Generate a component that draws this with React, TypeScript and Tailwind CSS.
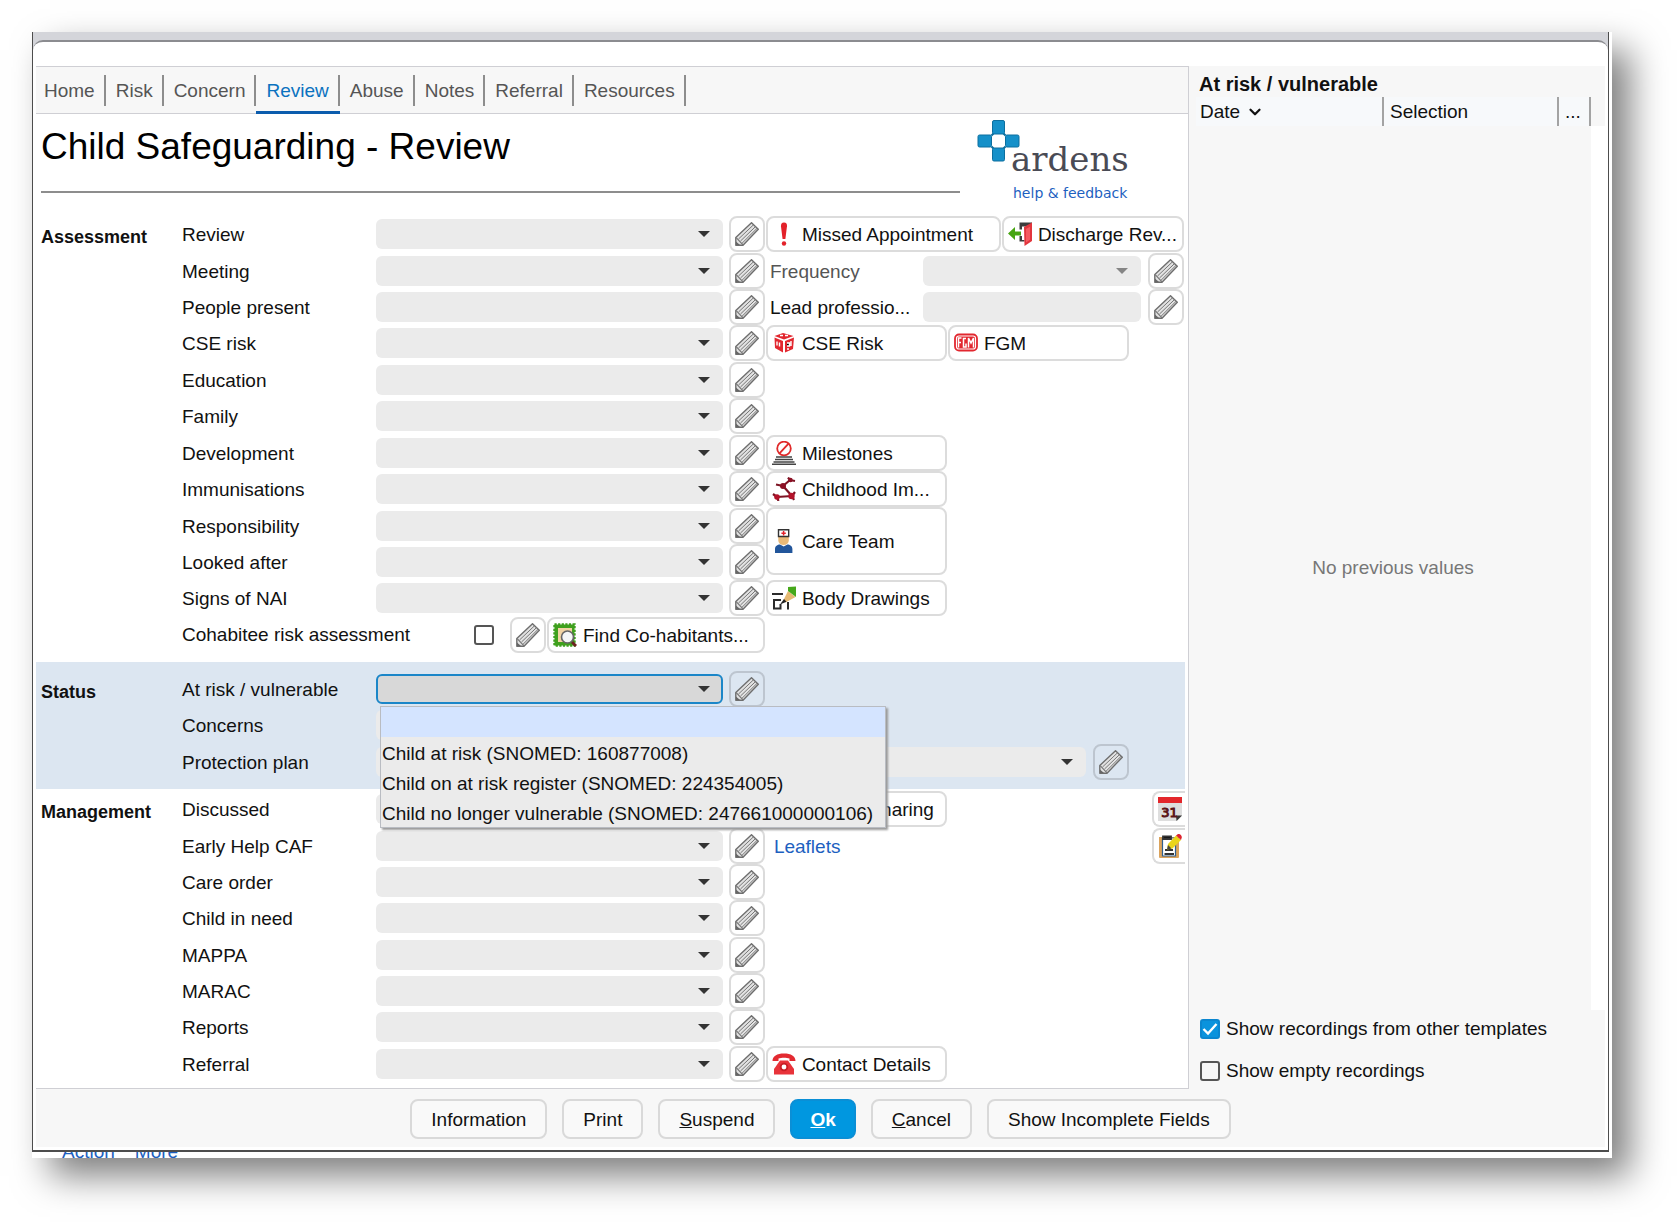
import { useState, type ReactNode } from 'react'
import { ChevronDown } from 'lucide-react'

const tabs = ['Home', 'Risk', 'Concern', 'Review', 'Abuse', 'Notes', 'Referral', 'Resources']

const statusOptions = [
  '',
  'Child at risk (SNOMED: 160877008)',
  'Child on at risk register (SNOMED: 224354005)',
  'Child no longer vulnerable (SNOMED: 247661000000106)',
]

const slug = (text: string) => text.toLowerCase().replace(/[^a-z]+/g, '-')

/* ---------- icons ---------- */

function PencilIcon() {
  return (
    <svg viewBox="0 0 24 24" className="w-6 h-6" fill="none" aria-hidden="true">
      <path d="M.8 15.500 16.500.7 23.300 7.200 8 23.200H.8z" fill="#e2e2e2" stroke="#6e6e6e" strokeWidth="1.400" strokeLinejoin="round" />
      <path d="M3.500 17 18.500 2.800M5.500 19 20.500 4.600M7 21.300 22 6.400" stroke="#777" strokeWidth="1" />
      <path d="M1.200 15.700 8 22.800" stroke="#777" strokeWidth="1.200" />
      <path d="M1 19.500V23h4z" fill="#666" />
    </svg>
  )
}

function AlertIcon() {
  return (
    <svg viewBox="0 0 24 24" className="w-6 h-6" aria-hidden="true">
      <path d="M12 .5c2.300 0 3.200 1.400 3 3.800L13.400 17h-2.800L9 4.300C8.800 1.900 9.700.5 12 .5z" fill="#e3222a" />
      <circle cx="12" cy="21.500" r="2.200" fill="#e3222a" />
    </svg>
  )
}

function ExitIcon() {
  return (
    <svg viewBox="0 0 24 24" className="w-6 h-6" aria-hidden="true">
      <path d="M11.500.5H24v4H14v3h-2.500zM11.500 14H14v4h2.500v1.500h-5z" fill="#3c3c3c" />
      <path d="M16 5l8-4.500V19l-7.500 5z" fill="#e2353d" />
      <path d="M18 7l4-2.300v13l-4 2.800z" fill="#f55a60" />
      <path d="M0 11.500 7 5v4.500h6v4H7V18z" fill="#47a512" />
    </svg>
  )
}

function DiceIcon() {
  return (
    <svg viewBox="0 0 24 24" className="w-6 h-6" aria-hidden="true">
      <path d="M11 2 21.500 5 12 8.500 2.500 5zM2.500 6.500 11 10v11.500L3 17zM13 10l9-3.500L21 18l-8 3.500z" fill="#e2272f" />
      <path d="M8 4.500h3M13 4.500h3M5 10.500v4M7.500 11.500v4M15 12h2.500v3H15M19 10v5M15 18h2" stroke="#fff" strokeWidth="1.400" />
    </svg>
  )
}

function FgmIcon() {
  return (
    <svg viewBox="0 0 24 24" className="w-6 h-6" aria-hidden="true">
      <rect x="1" y="3.500" width="22" height="16" rx="4" fill="#fff" stroke="#e2272f" strokeWidth="1.800" />
      <rect x="3" y="5.500" width="18" height="12" rx="2" fill="#e2272f" />
      <path d="M4.500 16.500V7h3M4.500 11.500H7M12 7.500H9.500v8.500H12v-3.500M14.500 16.500V7l2.500 5 2.500-5v9.500" fill="none" stroke="#fff" strokeWidth="1.500" />
    </svg>
  )
}

function MilestoneIcon() {
  return (
    <svg viewBox="0 0 24 24" className="w-6 h-6" fill="none" aria-hidden="true">
      <circle cx="12" cy="7.500" r="6.800" stroke="#e02a2a" strokeWidth="1.800" />
      <path d="M7.500 12.300 16.500 2.700" stroke="#e02a2a" strokeWidth="1.800" />
      <path d="M4 16h16M3 18.500h18M1.500 21h21M0 23.300h24" stroke="#444" strokeWidth="1.500" />
    </svg>
  )
}

function AntibodyIcon() {
  return (
    <svg viewBox="0 0 24 24" className="w-6 h-6" fill="none" aria-hidden="true">
      <path d="M18 3l-7 6M11 9 4 7.500M11 9l9 10M5 20l15-1M5 20l-4-3M5 20l1.500 4M20 19l3-4M18 3l5 1M18 3l-2-2.500M20 19l2 4" stroke="#7d1424" strokeWidth="2.200" />
      <circle cx="11" cy="9" r="3" fill="#8c1024" />
      <circle cx="5" cy="20" r="2.800" fill="#b3122a" />
      <circle cx="19.500" cy="19" r="3.200" fill="#b3122a" />
      <circle cx="18.500" cy="3" r="2.200" fill="#8c1024" />
    </svg>
  )
}

function NurseIcon() {
  return (
    <svg viewBox="0 0 24 24" className="w-6 h-6" aria-hidden="true">
      <path d="M6.300 7h10.500v4.500a5.200 4.500 0 0 1-10.500 0z" fill="#e8b978" />
      <path d="M6.500.8h10.200V7.500H6.500z" fill="#fff" stroke="#333" strokeWidth="1.400" />
      <path d="M11.600 2v4.400M9.400 4.200h4.400" stroke="#e3222a" strokeWidth="1.500" />
      <path d="M3 24v-4c0-3 2.500-4.500 5-4.500l3.700 2 3.700-2c2.500 0 5 1.500 5 4.500v4z" fill="#22569b" />
    </svg>
  )
}

function DrawIcon() {
  return (
    <svg viewBox="0 0 24 24" className="w-6 h-6" fill="none" aria-hidden="true">
      <path d="M0 8h11M9 14H2v8.500h6.500V18M16 16v7.500" stroke="#2b2b2b" strokeWidth="2" />
      <path d="M11.500 14 16 5l7.500 6-10 5.500z" fill="#e6b973" />
      <path d="M16 1 24 .5V11l-8-6z" fill="#46a81b" />
      <path d="M8 18.500 12 13l2.500 2.800z" fill="#222" />
    </svg>
  )
}

function FindIcon() {
  return (
    <svg viewBox="0 0 24 24" className="w-6 h-6" aria-hidden="true">
      <rect x="1.500" y="1.500" width="20" height="21" fill="#3fa01e" stroke="#3fa01e" strokeWidth="2.400" strokeDasharray="2.200 1.400" />
      <rect x="5" y="5" width="14" height="14" fill="#f1d3a3" />
      <path d="m19 19 4 4" stroke="#6b2320" strokeWidth="3" />
      <circle cx="14.500" cy="14" r="6" fill="#f4f6f7" stroke="#666" strokeWidth="1.600" />
    </svg>
  )
}

function PhoneIcon() {
  return (
    <svg viewBox="0 0 24 24" className="w-6 h-6" aria-hidden="true">
      <path d="M.5 9C.5 4 5 1.500 12 1.500S23.500 4 23.500 9h-6V6.500c-3-1-8-1-11 0V9z" fill="#e32a31" />
      <path d="M8 8.500h8l6 8.500v5.500H2V17z" fill="#e8333a" />
      <circle cx="12" cy="15" r="4.300" fill="#c91d25" />
      <circle cx="12" cy="15" r="2.400" fill="#fff" />
    </svg>
  )
}

function CalendarIcon() {
  return (
    <svg viewBox="0 0 24 24" className="w-6 h-6 shrink-0" aria-hidden="true">
      <path d="M0 0h24v19l-5 5H0z" fill="#dedede" />
      <path d="M0 0h24v6H0z" fill="#e3262b" />
      <path d="M18 18.500h6l-5.500 5.500z" fill="#333" />
      <text x="11.500" y="19.500" textAnchor="middle" className="font-['DejaVu_Sans'] text-[13px] fill-[#5c1518] stroke-[#5c1518]">31</text>
    </svg>
  )
}

function NoteIcon() {
  return (
    <svg viewBox="0 0 24 24" className="w-6 h-6 shrink-0" aria-hidden="true">
      <path d="M1 3h20v20a1 1 0 0 1-1 1H2a1 1 0 0 1-1-1z" fill="#dba35c" />
      <path d="M4.500 4h13v18h-13z" fill="#fff" stroke="#2f5f8f" strokeWidth="1.200" />
      <path d="M5 2.500h8V5H5zM7 16h8M6.500 20h9.500" stroke="#333" strokeWidth="1.800" />
      <path d="M9 15.500 10 10 18 1.500 23 6l-8.500 8.500z" fill="#ead41a" />
      <path d="M18 1.500 20 0c2-.5 4 1.500 3.800 3.500L23 6z" fill="#dd2430" />
      <path d="M9 15.500 10 11l3.500 3.500z" fill="#444" />
    </svg>
  )
}

/* ---------- controls ---------- */

function Caret({ muted = false }: { muted?: boolean }) {
  return (
    <svg viewBox="0 0 12 6" aria-hidden="true" className={`pointer-events-none absolute right-[13px] top-[12px] w-3 h-1.5 ${muted ? 'fill-[#858585]' : 'fill-[#333]'}`}>
      <path d="M0 0h12L6 6z" />
    </svg>
  )
}

function Dropdown({ id, label, muted = false, active = false }: { id?: string; label?: string; muted?: boolean; active?: boolean }) {
  return (
    <div className="relative">
      <select
        id={id}
        aria-label={label}
        className={`block w-full h-[30px] appearance-none rounded-md outline-none ${
          active ? 'bg-[#d8d8d8] border-2 border-[#1b86c8]' : 'bg-[#ebebeb]'
        }`}
      >
        <option value="" />
      </select>
      <Caret muted={muted} />
      {active && (
        <ul
          role="listbox"
          aria-label="At risk / vulnerable"
          className="absolute z-10 left-1 top-8 min-w-[506px] border border-[#b9bcc2] bg-[#ebebeb] shadow-[2px_2px_2px_#9a9a9a] whitespace-nowrap"
        >
          {statusOptions.map((option, i) => (
            <li key={option} role="option" aria-selected={i === 0} className={`h-[30px] px-px leading-[34px] ${i === 0 ? 'bg-[#d4e4ff]' : ''}`}>
              {option}
            </li>
          ))}
        </ul>
      )}
    </div>
  )
}

function PencilButton({ label }: { label: string }) {
  return (
    <button aria-label={`Edit ${label}`} className="shrink-0 w-9 h-9 flex items-center justify-center rounded-lg border-2 border-black/14">
      <PencilIcon />
    </button>
  )
}

function ActionButton({ icon, children, className = 'w-[181px] h-9' }: { icon: ReactNode; children: ReactNode; className?: string }) {
  return (
    <button className={`shrink-0 flex items-center gap-[6px] pl-1 rounded-lg border-2 border-[#dcdcdc] bg-white text-left whitespace-nowrap ${className}`}>
      {icon}
      <span className="pt-0.5">{children}</span>
    </button>
  )
}

interface FieldProps {
  label: string
  kind?: 'select' | 'text'
  active?: boolean
}

// Three grid cells: label, control, edit button
function Field({ label, kind = 'select', active }: FieldProps) {
  const id = slug(label)
  return (
    <>
      <label htmlFor={id} className="col-start-1 pt-0.5">{label}</label>
      {kind === 'select' ? (
        <Dropdown id={id} active={active} />
      ) : (
        <input id={id} type="text" className="w-full h-[30px] rounded-md bg-[#ebebeb] outline-none" />
      )}
      <div className="flex justify-end pr-px">
        <PencilButton label={label} />
      </div>
    </>
  )
}

function Section({ title, className, gridClass, children }: { title: string; className: string; gridClass: string; children: ReactNode }) {
  return (
    <section className={`flex pl-[5px] pr-[3px] ${className}`}>
      <h2 className="w-[141px] shrink-0 pt-[9px] text-[18px] leading-6 font-bold">{title}</h2>
      <div className={`flex-1 grid grid-cols-[194px_minmax(0,346fr)_43px_minmax(0,418fr)] auto-rows-fr items-center ${gridClass}`}>
        {children}
      </div>
    </section>
  )
}

function Logo() {
  return (
    <a href="#help" className="shrink-0 w-[228px] pl-[17px] pt-1 text-[#1d5fc0]">
      <div className="flex items-start">
        <svg viewBox="0 0 44 44" className="w-11 h-11 -mr-2.5 shrink-0" fill="#1590c9" stroke="#0c6f9f" aria-hidden="true">
          <path d="m14.500 17.500 2-2M28.500 17.500l-2-2M14.500 28.500l2 2M28.500 28.500l-2 2" strokeWidth="2" />
          <rect x="15.500" y="2.500" width="12" height="13.500" rx="1.500" />
          <rect x="1" y="17" width="13.500" height="12" rx="1.500" />
          <rect x="28.500" y="17" width="13.500" height="12" rx="1.500" />
          <rect x="15.500" y="30" width="12" height="13" rx="1.500" />
        </svg>
        <span className="pt-[21px] font-['DejaVu_Serif',serif] text-[34px] leading-10 text-[#4a4b55]">ardens</span>
      </div>
      <span className="block pl-[36px] pt-1 font-['DejaVu_Sans',sans-serif] text-[14px] leading-5">help &amp; feedback</span>
    </a>
  )
}

function CheckBox({ id, checked, onChange }: { id: string; checked: boolean; onChange: () => void }) {
  return (
    <span className="relative w-5 h-5 shrink-0">
      <input
        id={id}
        type="checkbox"
        checked={checked}
        onChange={onChange}
        className="block w-5 h-5 appearance-none rounded-[3px] border-2 border-[#555] checked:border-[#0a86cf] checked:bg-[#0a93dd]"
      />
      {checked && (
        <svg viewBox="0 0 20 20" className="pointer-events-none absolute inset-0" fill="none" stroke="#fff" strokeWidth="2.400" aria-hidden="true">
          <path d="m3.500 10 4.500 4.500 8.500-9.500" />
        </svg>
      )}
    </span>
  )
}

function RecordingsPanel() {
  const [showOther, setShowOther] = useState(true)
  const [showEmpty, setShowEmpty] = useState(false)

  return (
    <aside className="w-[416px] shrink-0 flex flex-col">
      <h2 className="h-[31px] pl-[10px] pt-1 text-[20px] leading-7 font-bold">At risk / vulnerable</h2>
      <div className="flex-1 flex">
        <div className="flex-1 pl-[7px]">
          <table className="w-full h-full table-fixed">
            <thead>
              <tr className="h-[29px] bg-[#f7f9fb] text-left">
                <th className="w-[187px] pl-1 font-normal border-r-2 border-[#a3a3a3]">
                  <span className="flex items-center gap-1.5">
                    Date <ChevronDown className="w-[18px] h-[18px]" strokeWidth={3} />
                  </span>
                </th>
                <th className="pl-1.5 font-normal border-r-2 border-[#a3a3a3]">Selection</th>
                <th className="w-[32px] pl-1.5 font-normal border-r-2 border-[#a3a3a3]">...</th>
              </tr>
            </thead>
            <tbody>
              <tr>
                <td colSpan={3} className="text-center text-[#777]">No previous values</td>
              </tr>
            </tbody>
          </table>
        </div>
        <div className="w-[14px] mt-[29px] bg-white" />
      </div>
      <div className="h-[79px] shrink-0 pl-[11px] pt-[9px] flex flex-col gap-[22px]">
        <label htmlFor="show-other" className="flex items-center gap-[6px] leading-5">
          <CheckBox id="show-other" checked={showOther} onChange={() => setShowOther(!showOther)} />
          Show recordings from other templates
        </label>
        <label htmlFor="show-empty" className="flex items-center gap-[6px] leading-5">
          <CheckBox id="show-empty" checked={showEmpty} onChange={() => setShowEmpty(!showEmpty)} />
          Show empty recordings
        </label>
      </div>
    </aside>
  )
}

function FooterButton({ children, primary = false }: { children: ReactNode; primary?: boolean }) {
  return (
    <button
      className={`h-10 pt-0.5 rounded-lg border-2 ${
        primary ? 'px-[18px] bg-[#0097e0] border-[#0a8fd6] text-white font-bold' : 'px-[19px] bg-[#f9f9f9] border-[#d9d9d9]'
      }`}
    >
      {children}
    </button>
  )
}

function EdgeButton({ label, children }: { label: string; children: ReactNode }) {
  return (
    <button aria-label={label} className="w-[33px] h-9 pl-1 flex items-center overflow-hidden rounded-l-lg border-2 border-r-0 border-[#dcdcdc]">
      {children}
    </button>
  )
}

export default function App() {
  const [tab, setTab] = useState('Review')
  const [cohabitee, setCohabitee] = useState(false)

  return (
    <div className="min-h-screen bg-white pt-8 pl-8 pr-[65px] pb-[65px] font-['Liberation_Sans',Arial,sans-serif] text-[19px] leading-6 text-[#111]">
      <div className="bg-white shadow-[18px_18px_34px_rgba(0,0,0,0.5)]">
        <div className="mr-[3px] pt-2 bg-[#d4d5da] border-x border-b-2 border-[#4d4d4d]">
          <div className="rounded-t-[10px] border-t-2 border-[#8b8c90] bg-white px-[3px] pb-[3px]">
            <div className="h-6" />
            <div className="flex bg-[#f7f7f7]">
              <main className="flex-1 min-w-0 border border-l-0 border-[#cfcfd4] bg-white">
                <nav className="flex h-[47px] border-b border-[#cfcfd4] bg-[#f7f7f7] text-[#555]">
                  {tabs.map(name => (
                    <button
                      key={name}
                      onClick={() => setTab(name)}
                      className={`flex pt-2 -mb-px first:*:pl-2 ${name === tab ? 'border-b-[3px] border-[#0b5cad] text-[#0b72bf]' : ''}`}
                    >
                      <span className="h-[31px] pl-[10px] pr-[9px] leading-8 border-r-2 border-[#8d8d8d]">{name}</span>
                    </button>
                  ))}
                </nav>

                <header className="h-[102px] flex pl-[5px]">
                  <div className="flex-1 h-[79px] border-b-2 border-[#8d8d8d]">
                    <h1 className="pt-3 text-[37px] leading-[42px] text-black">Child Safeguarding - Review</h1>
                  </div>
                  <Logo />
                </header>

                <Section title="Assessment" className="" gridClass="min-h-[437px]">
                  <Field label="Review" />
                  <div className="flex gap-px">
                    <ActionButton icon={<AlertIcon />} className="w-[235px] h-9">Missed Appointment</ActionButton>
                    <ActionButton icon={<ExitIcon />} className="w-[182px] h-9">Discharge Rev...</ActionButton>
                  </div>

                  <Field label="Meeting" />
                  <div className="flex items-center pl-1 pr-px">
                    <label htmlFor="frequency" className="w-[153px] pt-0.5 text-[#555]">Frequency</label>
                    <div className="flex-1 mr-[7px]">
                      <Dropdown id="frequency" muted />
                    </div>
                    <PencilButton label="Frequency" />
                  </div>

                  <Field label="People present" kind="text" />
                  <div className="flex items-center pl-1 pr-px">
                    <label htmlFor="lead" className="w-[153px] pt-0.5">Lead professio...</label>
                    <input id="lead" type="text" className="flex-1 min-w-0 mr-[7px] h-[30px] rounded-md bg-[#ebebeb] outline-none" />
                    <PencilButton label="Lead professional" />
                  </div>

                  <Field label="CSE risk" />
                  <div className="flex gap-px">
                    <ActionButton icon={<DiceIcon />}>CSE Risk</ActionButton>
                    <ActionButton icon={<FgmIcon />}>FGM</ActionButton>
                  </div>

                  <Field label="Education" />
                  <Field label="Family" />

                  <Field label="Development" />
                  <ActionButton icon={<MilestoneIcon />}>Milestones</ActionButton>

                  <Field label="Immunisations" />
                  <ActionButton icon={<AntibodyIcon />}>Childhood Im...</ActionButton>

                  <Field label="Responsibility" />
                  <ActionButton icon={<NurseIcon />} className="row-span-2 self-start w-[181px] h-[68px]">Care Team</ActionButton>
                  <Field label="Looked after" />

                  <Field label="Signs of NAI" />
                  <ActionButton icon={<DrawIcon />}>Body Drawings</ActionButton>

                  <div className="col-span-full flex items-center">
                    <label htmlFor="cohabitee" className="w-[292px]">Cohabitee risk assessment</label>
                    <CheckBox id="cohabitee" checked={cohabitee} onChange={() => setCohabitee(!cohabitee)} />
                    <div className="flex gap-px pl-4">
                      <PencilButton label="Cohabitee risk assessment" />
                      <ActionButton icon={<FindIcon />} className="w-[218px] h-9">Find Co-habitants...</ActionButton>
                    </div>
                  </div>
                </Section>

                <div className="mt-[9px] mr-[3px] bg-[#dce6f1]">
                  <Section title="Status" className="-mr-[3px] py-[9px]" gridClass="min-h-[109px]">
                    <Field label="At risk / vulnerable" active />
                    <Field label="Concerns" />
                    <Field label="Protection plan" />
                    <div className="flex items-center gap-[7px] pr-[56px]">
                      <div className="flex-1">
                        <Dropdown label="Protection plan category" />
                      </div>
                      <PencilButton label="Protection plan category" />
                    </div>
                  </Section>
                </div>

                <Section title="Management" className="mt-0.5 pb-1.5" gridClass="min-h-[291px]">
                  <Field label="Discussed" />
                  <div className="flex justify-between">
                    <ActionButton icon={<NoteIcon />}>Record Sharing</ActionButton>
                    <EdgeButton label="Calendar">
                      <CalendarIcon />
                    </EdgeButton>
                  </div>

                  <Field label="Early Help CAF" />
                  <div className="flex items-center justify-between">
                    <a href="#leaflets" className="pl-2 pt-0.5 text-[#1d5fc0]">Leaflets</a>
                    <EdgeButton label="Add note">
                      <NoteIcon />
                    </EdgeButton>
                  </div>

                  <Field label="Care order" />
                  <Field label="Child in need" />
                  <Field label="MAPPA" />
                  <Field label="MARAC" />
                  <Field label="Reports" />
                  <Field label="Referral" />
                  <ActionButton icon={<PhoneIcon />}>Contact Details</ActionButton>
                </Section>
              </main>

              <RecordingsPanel />
            </div>

            <footer className="flex justify-center gap-[15px] pt-[10px] pb-2 bg-[#f7f7f7]">
              <FooterButton>Information</FooterButton>
              <FooterButton>Print</FooterButton>
              <FooterButton><u>S</u>uspend</FooterButton>
              <FooterButton primary><u>O</u>k</FooterButton>
              <FooterButton><u>C</u>ancel</FooterButton>
              <FooterButton>Show Incomplete Fields</FooterButton>
            </footer>
          </div>
        </div>
        <div className="flex items-end gap-5 h-1.5 pl-[30px] overflow-hidden leading-3 text-[#1d5fc0]">
          <a href="#action">Action</a>
          <a href="#more">More</a>
        </div>
      </div>
    </div>
  )
}
